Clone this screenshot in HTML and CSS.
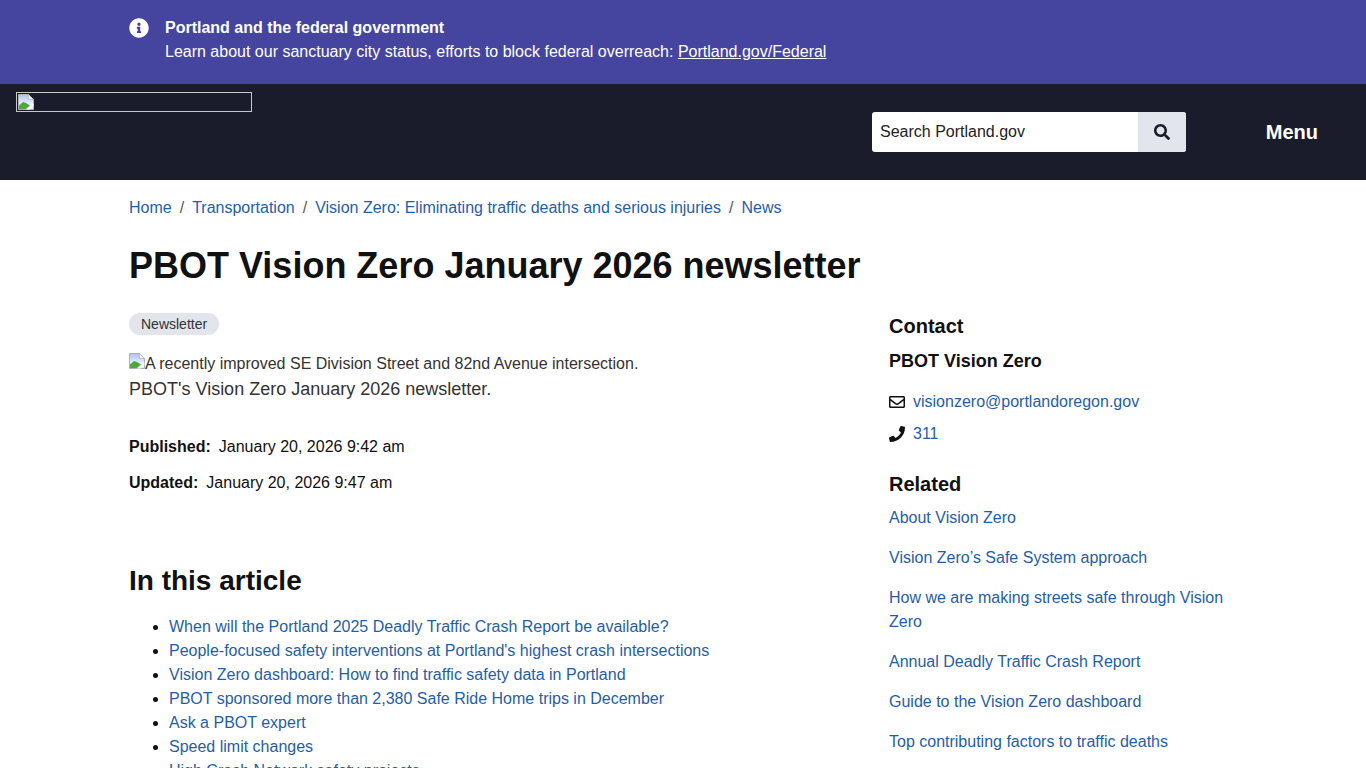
FILE: index.html
```html
<!DOCTYPE html>
<html lang="en">
<head>
<meta charset="utf-8">
<title>PBOT Vision Zero January 2026 newsletter</title>
<link rel="stylesheet" href="styles.css">
</head>
<body>
<svg class="defs" width="0" height="0" aria-hidden="true">
  <defs>
    <linearGradient id="sky" x1="0" y1="0" x2="0" y2="1"><stop offset="0" stop-color="#a9c2f2"/><stop offset=".6" stop-color="#e6eeff"/></linearGradient>
    <symbol id="broken-image" viewBox="0 0 16 16">
      <path fill="url(#sky)" stroke="#b0b0b0" stroke-width="1" d="M.5.5h10l5 5v10h-15z"/>
      <path fill="#f4f4f4" stroke="#b0b0b0" stroke-width=".7" d="M10.500.5v5h5z"/>
      <path fill="#4fa83a" d="M1 15v-3.500l4-3.500 3 1 4 2.500-4 3.500z"/>
      <path fill="#fff" d="M8 15.500l7.500-6v2.500l-4 3.500z"/>
    </symbol>
  </defs>
</svg>
<div class="alert">
  <div class="alert-inner">
    <svg class="alert-icon" viewBox="0 0 512 512"><path fill="#fff" d="M256 8C119.043 8 8 119.083 8 256c0 136.997 111.043 248 248 248s248-111.003 248-248C504 119.083 392.957 8 256 8zm0 110c23.196 0 42 18.804 42 42s-18.804 42-42 42-42-18.804-42-42 18.804-42 42-42zm56 254c0 6.627-5.373 12-12 12h-88c-6.627 0-12-5.373-12-12v-24c0-6.627 5.373-12 12-12h12v-64h-12c-6.627 0-12-5.373-12-12v-24c0-6.627 5.373-12 12-12h64c6.627 0 12 5.373 12 12v100h12c6.627 0 12 5.373 12 12v24z"/></svg>
    <div>
      <div class="alert-title">Portland and the federal government</div>
      <div>Learn about our sanctuary city status, efforts to block federal overreach: <a href="#" class="alert-link">Portland.gov/Federal</a></div>
    </div>
  </div>
</div>
<header class="site-header">
  <div class="logo"><svg class="broken"><use href="#broken-image"/></svg></div>
  <form class="search">
    <span class="search-field">Search Portland.gov</span>
    <span class="search-btn">
      <svg class="search-icon" viewBox="0 0 512 512"><path fill="#1a1b2b" d="M505 442.700 405.300 343c-4.500-4.500-10.600-7-17-7H372c27.600-35.300 44-79.700 44-128C416 93.100 322.900 0 208 0S0 93.100 0 208s93.100 208 208 208c48.300 0 92.700-16.400 128-44v16.300c0 6.400 2.500 12.500 7 17l99.700 99.700c9.400 9.400 24.600 9.400 33.900 0l28.300-28.300c9.400-9.400 9.400-24.600.1-34zM208 336c-70.700 0-128-57.200-128-128 0-70.700 57.200-128 128-128 70.700 0 128 57.200 128 128 0 70.700-57.200 128-128 128z"/></svg>
    </span>
  </form>
  <div class="menu">Menu</div>
</header>
<main class="page">
  <nav class="crumbs">
    <a href="#">Home</a><span class="sep">/</span><a href="#">Transportation</a><span class="sep">/</span><a href="#">Vision Zero: Eliminating traffic deaths and serious injuries</a><span class="sep">/</span><a href="#">News</a>
  </nav>
  <h1>PBOT Vision Zero January 2026 newsletter</h1>
  <div class="columns">
    <div class="content">
      <span class="badge">Newsletter</span>
      <div class="figure"><svg class="broken"><use href="#broken-image"/></svg>A recently improved SE Division Street and 82nd Avenue intersection.</div>
      <p class="lead">PBOT's Vision Zero January 2026 newsletter.</p>
      <div class="meta"><b>Published:</b>January 20, 2026 9:42 am</div>
      <div class="meta"><b>Updated:</b>January 20, 2026 9:47 am</div>
      <h2 class="toc-title">In this article</h2>
      <ul class="toc">
        <li><a href="#">When will the Portland 2025 Deadly Traffic Crash Report be available?</a></li>
        <li><a href="#">People-focused safety interventions at Portland's highest crash intersections</a></li>
        <li><a href="#">Vision Zero dashboard: How to find traffic safety data in Portland</a></li>
        <li><a href="#">PBOT sponsored more than 2,380 Safe Ride Home trips in December</a></li>
        <li><a href="#">Ask a PBOT expert</a></li>
        <li><a href="#">Speed limit changes</a></li>
        <li><a href="#">High Crash Network safety projects</a></li>
      </ul>
    </div>
    <aside class="side">
      <h2 class="side-title">Contact</h2>
      <div class="org">PBOT Vision Zero</div>
      <div class="contact"><svg class="c-icon" viewBox="0 0 512 512"><path fill="#111" d="M464 64H48C21.500 64 0 85.500 0 112v288c0 26.500 21.500 48 48 48h416c26.500 0 48-21.500 48-48V112c0-26.500-21.500-48-48-48zm0 48v40.800c-22.400 18.300-58.200 46.700-134.600 106.500-16.800 13.200-50.200 45.100-73.400 44.700-23.200.4-56.600-31.500-73.400-44.700C106.200 199.500 70.400 171.100 48 152.800V112h416zM48 400V214.400c22.900 18.300 55.400 43.900 104.900 82.600 21.900 17.200 60.100 55.200 103.100 55 42.700.2 80.500-37.200 103.100-54.900 49.500-38.800 82-64.400 104.900-82.700V400H48z"/></svg><a href="#">visionzero@portlandoregon.gov</a></div>
      <div class="contact"><svg class="c-icon" viewBox="0 0 512 512"><path fill="#111" d="M493.400 24.600l-104-24c-11.300-2.600-22.900 3.300-27.500 13.900l-48 112c-4.200 9.800-1.400 21.300 6.900 28l60.600 49.600c-36 76.700-98.900 140.500-177.200 177.200l-49.600-60.600c-6.800-8.300-18.200-11.100-28-6.900l-112 48C3.900 366.500-2 378.100.6 389.400l24 104C27.100 504.200 36.700 512 48 512c256.100 0 464-207.500 464-464 0-11.200-7.700-20.900-18.600-23.400z"/></svg><a href="#">311</a></div>
      <h2 class="side-title related">Related</h2>
      <ul class="rel">
        <li><a href="#">About Vision Zero</a></li>
        <li><a href="#">Vision Zero’s Safe System approach</a></li>
        <li><a href="#">How we are making streets safe through Vision Zero</a></li>
        <li><a href="#">Annual Deadly Traffic Crash Report</a></li>
        <li><a href="#">Guide to the Vision Zero dashboard</a></li>
        <li><a href="#">Top contributing factors to traffic deaths</a></li>
      </ul>
    </aside>
  </div>
</main>
</body>
</html>
```
FILE: styles.css
```css
* { box-sizing: border-box; }
html, body { margin: 0; height: 768px; overflow: hidden; }
body { font: 16px/24px "Liberation Sans", Arial, sans-serif; color: #111; background: #fff; }
a { color: #1f5ea8; text-decoration: none; }
h1, h2, p, ul { margin: 0; }
.defs { display: block; height: 0; }

.alert { background: #4545a0; color: #fff; height: 84px; padding: 16px 129px 0; }
.alert-inner { display: flex; gap: 16px; }
.alert-icon { width: 20px; height: 20px; margin-top: 2px; flex: none; }
.alert-title { font-weight: 700; }
.alert-link { color: #fff; text-decoration: underline; }

.site-header { background: #1a1b2b; height: 96px; display: flex; align-items: flex-start; padding: 8px 48px 0 16px; }
.logo { width: 236px; height: 20px; border: 1px solid #c8c8c8; padding: 1px; display: flex; }
.broken { width: 16px; height: 16px; flex: none; display: inline-block; }
.search { display: flex; width: 314px; height: 40px; margin: 20px 0 0 620px; background: #fff; border-radius: 3px; overflow: hidden; }
.search-field { flex: 1; padding: 8px; color: #222; }
.search-btn { width: 48px; background: #e2e5ec; display: flex; align-items: center; justify-content: center; }
.search-icon { width: 16px; height: 16px; }
.menu { margin: 28px 0 0 auto; color: #fff; font-size: 20px; font-weight: 700; }

.page { padding: 16px 129px 0; }
.sep { color: #555; margin: 0 8px; }
h1 { font-size: 36px; line-height: 44px; margin-top: 24px; font-weight: 700; }
.columns { display: flex; margin-top: 23px; }
.content { width: 760px; flex: none; }
.side { width: 348px; flex: none; }

.badge { display: inline-block; background: #e2e5ec; border-radius: 11px; font-size: 14px; line-height: 22px; padding: 0 12px; color: #333; vertical-align: top; margin-top: 2px; }
.figure { margin-top: 18px; height: 22px; line-height: 22px; color: #333; }
.lead { font-size: 18px; line-height: 28px; color: #333; }
.meta { margin-bottom: 12px; }
.meta b { margin-right: 8px; }
.lead + .meta { margin-top: 32px; }
.toc-title { font-size: 28px; line-height: 36px; margin-top: 68px; }
.toc { padding-left: 40px; margin-top: 16px; }

.side-title { font-size: 20px; line-height: 28px; margin-top: 1px; }
.org { font-size: 18px; font-weight: 700; line-height: 28px; margin-top: 7px; }
.contact { display: flex; align-items: center; gap: 8px; height: 32px; }
.org + .contact { margin-top: 11px; }
.c-icon { width: 16px; height: 16px; flex: none; }
.related { margin-top: 20px; }
.rel { list-style: none; padding: 0; margin-top: 8px; }
.rel li { margin-bottom: 16px; }
```
